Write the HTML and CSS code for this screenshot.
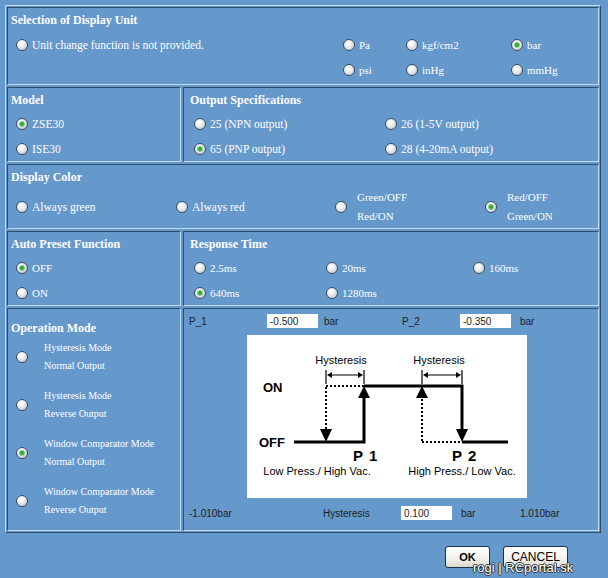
FILE: index.html
```html
<!DOCTYPE html>
<html lang="en">
<head>
    <meta charset="UTF-8">
    <title>Sensor Settings</title>
    <link rel="stylesheet" href="styles.css">
</head>
<body>
    <!-- Settings panel -->
    <div class="panel">
        <section class="cell full">
            <h3>Selection of Display Unit</h3>
            <div class="unit-row">
                <label class="opt unit-none"><span class="radio"></span>Unit change function is not provided.</label>
                <div class="unit-grid">
                    <label class="opt"><span class="radio"></span><span class="small">Pa</span></label>
                    <label class="opt"><span class="radio"></span><span class="small">kgf/cm2</span></label>
                    <label class="opt"><span class="radio on"></span><span class="small">bar</span></label>
                    <label class="opt"><span class="radio"></span><span class="small">psi</span></label>
                    <label class="opt"><span class="radio"></span><span class="small">inHg</span></label>
                    <label class="opt"><span class="radio"></span><span class="small">mmHg</span></label>
                </div>
            </div>
        </section>

        <section class="cell left">
            <h3>Model</h3>
            <div class="list">
                <label class="opt"><span class="radio on"></span>ZSE30</label>
                <label class="opt"><span class="radio"></span>ISE30</label>
            </div>
        </section>
        <section class="cell right">
            <h3>Output Specifications</h3>
            <div class="list output-grid">
                <label class="opt"><span class="radio"></span>25 (NPN output)</label>
                <label class="opt"><span class="radio"></span>26 (1-5V output)</label>
                <label class="opt"><span class="radio on"></span>65 (PNP output)</label>
                <label class="opt"><span class="radio"></span>28 (4-20mA output)</label>
            </div>
        </section>

        <section class="cell full">
            <h3>Display Color</h3>
            <div class="color-row">
                <label class="opt"><span class="radio"></span>Always green</label>
                <label class="opt"><span class="radio"></span>Always red</label>
                <label class="opt two"><span class="radio"></span><span class="lines small">Green/OFF<br>Red/ON</span></label>
                <label class="opt two"><span class="radio on"></span><span class="lines small">Red/OFF<br>Green/ON</span></label>
            </div>
        </section>

        <section class="cell left">
            <h3>Auto Preset Function</h3>
            <div class="list">
                <label class="opt"><span class="radio on"></span><span class="small">OFF</span></label>
                <label class="opt"><span class="radio"></span><span class="small">ON</span></label>
            </div>
        </section>
        <section class="cell right">
            <h3>Response Time</h3>
            <div class="list response-grid">
                <label class="opt"><span class="radio"></span><span class="small">2.5ms</span></label>
                <label class="opt"><span class="radio"></span><span class="small">20ms</span></label>
                <label class="opt"><span class="radio"></span><span class="small">160ms</span></label>
                <label class="opt"><span class="radio on"></span><span class="small">640ms</span></label>
                <label class="opt"><span class="radio"></span><span class="small">1280ms</span></label>
            </div>
        </section>

        <section class="cell left mode">
            <h3>Operation Mode</h3>
            <div class="mode-list">
                <label class="mode-opt"><span class="radio"></span><span class="lines">Hysteresis Mode<br>Normal Output</span></label>
                <label class="mode-opt"><span class="radio"></span><span class="lines">Hysteresis Mode<br>Reverse Output</span></label>
                <label class="mode-opt"><span class="radio on"></span><span class="lines">Window Comparator Mode<br>Normal Output</span></label>
                <label class="mode-opt"><span class="radio"></span><span class="lines">Window Comparator Mode<br>Reverse Output</span></label>
            </div>
        </section>
        <section class="cell chart">
            <div class="chart-top">
                <span>P_1</span>
                <input type="text" value="-0.500">
                <span>bar</span>
                <span>P_2</span>
                <input type="text" value="-0.350">
                <span>bar</span>
            </div>
            <div class="diagram">
                <svg viewBox="0 0 280 163" width="280" height="163">
                    <g font-family="'Liberation Sans', Arial, sans-serif" fill="#000">
                        <text x="94" y="29" font-size="11" text-anchor="middle">Hysteresis</text>
                        <text x="192" y="29" font-size="11" text-anchor="middle">Hysteresis</text>
                        <text x="16" y="57" font-size="13" font-weight="bold">ON</text>
                        <text x="12" y="112" font-size="13" font-weight="bold">OFF</text>
                        <text x="106" y="126" font-size="15" font-weight="bold" letter-spacing="1">P 1</text>
                        <text x="205" y="126" font-size="15" font-weight="bold" letter-spacing="1">P 2</text>
                        <text x="70" y="140" font-size="11" text-anchor="middle">Low Press./ High Vac.</text>
                        <text x="215" y="140" font-size="11" text-anchor="middle">High Press./ Low Vac.</text>
                    </g>
                    <g stroke="#000" fill="none">
                        <!-- hysteresis arrows -->
                        <path d="M79 35V49M117 35V49M82 40H114" stroke-width="1.2"/>
                        <path d="M175 35V49M215 35V49M178 40H212" stroke-width="1.2"/>
                        <!-- solid switching lines -->
                        <path d="M47 107H117V60M117 51H215V96M215 107H261" stroke-width="3"/>
                        <!-- dotted return paths -->
                        <path d="M79 51H117M79 52V94" stroke-width="2" stroke-dasharray="2 2"/>
                        <path d="M175 107H215M175 106V62" stroke-width="2" stroke-dasharray="2 2"/>
                    </g>
                    <g fill="#000">
                        <path d="M80 40l5-3v6zM116 40l-5-3v6z"/>
                        <path d="M176 40l5-3v6zM214 40l-5-3v6z"/>
                        <path d="M73 94h12l-6 13z"/>
                        <path d="M111 63h12l-6-12z"/>
                        <path d="M169 63h12l-6-12z"/>
                        <path d="M209 94h12l-6 13z"/>
                    </g>
                </svg>
            </div>
            <div class="chart-bottom">
                <span>-1.010bar</span>
                <span>Hysteresis</span>
                <input type="text" value="0.100">
                <span>bar</span>
                <span>1.010bar</span>
            </div>
        </section>
    </div>

    <!-- Dialog buttons -->
    <div class="buttons">
        <button class="btn ok">OK</button>
        <button class="btn cancel">CANCEL</button>
    </div>

    <div class="watermark">rogi | RCportal.sk</div>
</body>
</html>
```

FILE: styles.css
```css
:root {
    --bg-color: #6598cb;
    --edge-dark: #2f4d6b;
    --edge-light: #c4daf0;
    --text-color: #ffffff;
    --serif: 'Liberation Serif', 'Times New Roman', serif;
    --sans: 'Liberation Sans', Arial, sans-serif;
}

* {
    margin: 0;
    padding: 0;
    box-sizing: border-box;
}

body {
    width: 608px;
    height: 578px;
    overflow: hidden;
    position: relative;
    background-color: var(--bg-color);
    color: var(--text-color);
    font-family: var(--serif);
    font-size: 11.5px;
}

.panel {
    margin: 5px 0 0 5px;
    width: 596px;
    height: 528px;
    padding: 1px;
    border: 1px solid;
    border-color: var(--edge-light) var(--edge-dark) var(--edge-dark) var(--edge-light);
    display: grid;
    grid-template-columns: 174px 1fr;
    grid-template-rows: 78px 75px 65px 75px 1fr;
    gap: 2px;
}

.cell {
    border: 1px solid;
    border-color: var(--edge-dark) var(--edge-light) var(--edge-light) var(--edge-dark);
    padding: 5px 3px;
}

.cell.full {
    grid-column: 1 / 3;
}

.cell.right {
    padding-left: 6px;
}

.cell h3 {
    font-size: 12px;
    font-weight: bold;
    line-height: 14px;
}

.opt {
    display: flex;
    align-items: center;
    gap: 4px;
    height: 25px;
    white-space: nowrap;
}

.small {
    font-size: 11px;
}

.radio {
    flex: none;
    width: 12px;
    height: 12px;
    border-radius: 50%;
    border: 1px solid #3d4f63;
    background: radial-gradient(circle at 40% 35%, #ffffff 0, #eef0f2 35%, #c9cfd6 80%, #aab3bd 100%);
}

.radio.on {
    background:
        radial-gradient(circle at 50% 50%, #2b9a2b 0, #3cb43c 1.6px, #9fd49f 2.8px, transparent 3.4px),
        radial-gradient(circle at 40% 35%, #ffffff 0, #eef0f2 35%, #c9cfd6 80%, #aab3bd 100%);
}

/* Display unit */
.unit-row {
    display: flex;
    margin-top: 9px;
}

.unit-row .opt {
    height: 18px;
}

.unit-none {
    flex: 0 0 332px;
    padding-left: 5px;
}

.unit-grid {
    display: grid;
    grid-template-columns: 63px 105px auto;
    grid-auto-rows: 18px;
    row-gap: 7px;
}

/* Option lists */
.list {
    margin-top: 4px;
    padding-left: 5px;
}

.cell.right .list {
    padding-left: 4px;
}

.output-grid {
    display: grid;
    grid-template-columns: 191px auto;
}

.response-grid {
    display: grid;
    grid-template-columns: 132px 147px auto;
}

/* Display colour */
.color-row {
    display: grid;
    grid-template-columns: 160px 159px 150px auto;
    align-items: center;
    height: 40px;
    margin-top: 3px;
    padding-left: 5px;
}

.opt.two {
    gap: 10px;
    height: 40px;
}

.lines {
    line-height: 19px;
}

/* Operation mode */
.cell.mode {
    padding-top: 12px;
}

.mode-list {
    margin-top: -2px;
}

.mode-opt {
    display: flex;
    align-items: center;
    height: 48px;
    padding-left: 5px;
    gap: 16px;
    font-size: 10px;
}

.mode-opt .lines {
    line-height: 18px;
}

/* Chart */
.cell.chart {
    padding: 5px;
    color: #1e1e1e;
    font-family: var(--sans);
    font-size: 10px;
}

.chart-top,
.chart-bottom {
    display: grid;
    align-items: center;
    height: 14px;
}

.chart-top {
    grid-template-columns: 78px 57px 78px 58px 60px auto;
}

.chart-bottom {
    grid-template-columns: 134px 78px 60px 59px auto;
    margin-top: 8px;
}

.chart input {
    width: 51px;
    height: 14px;
    border: none;
    background: #ffffff;
    color: #222;
    font-family: var(--sans);
    font-size: 10px;
    padding-left: 3px;
}

.diagram {
    margin: 7px 0 0 58px;
    width: 280px;
    height: 163px;
    background: #ffffff;
}

.diagram svg {
    display: block;
}

/* Buttons */
.buttons {
    display: flex;
    justify-content: flex-end;
    gap: 13px;
    margin-top: 13px;
    padding-right: 40px;
}

.btn {
    height: 22px;
    border: 1px solid #1d2f4a;
    border-radius: 3px;
    background: linear-gradient(#ffffff, #f1f1ec 60%, #d9d8d0);
    color: #000;
    font-family: var(--sans);
    font-size: 11px;
}

.btn.ok {
    width: 45px;
    font-weight: bold;
}

.btn.cancel {
    width: 65px;
    font-size: 12px;
}

.watermark {
    position: absolute;
    left: 473px;
    top: 560px;
    font-family: var(--sans);
    font-size: 13px;
    color: #ffffff;
    text-shadow: -1px 0 #333, 1px 0 #333, 0 -1px #333, 0 1px #333;
}
```
